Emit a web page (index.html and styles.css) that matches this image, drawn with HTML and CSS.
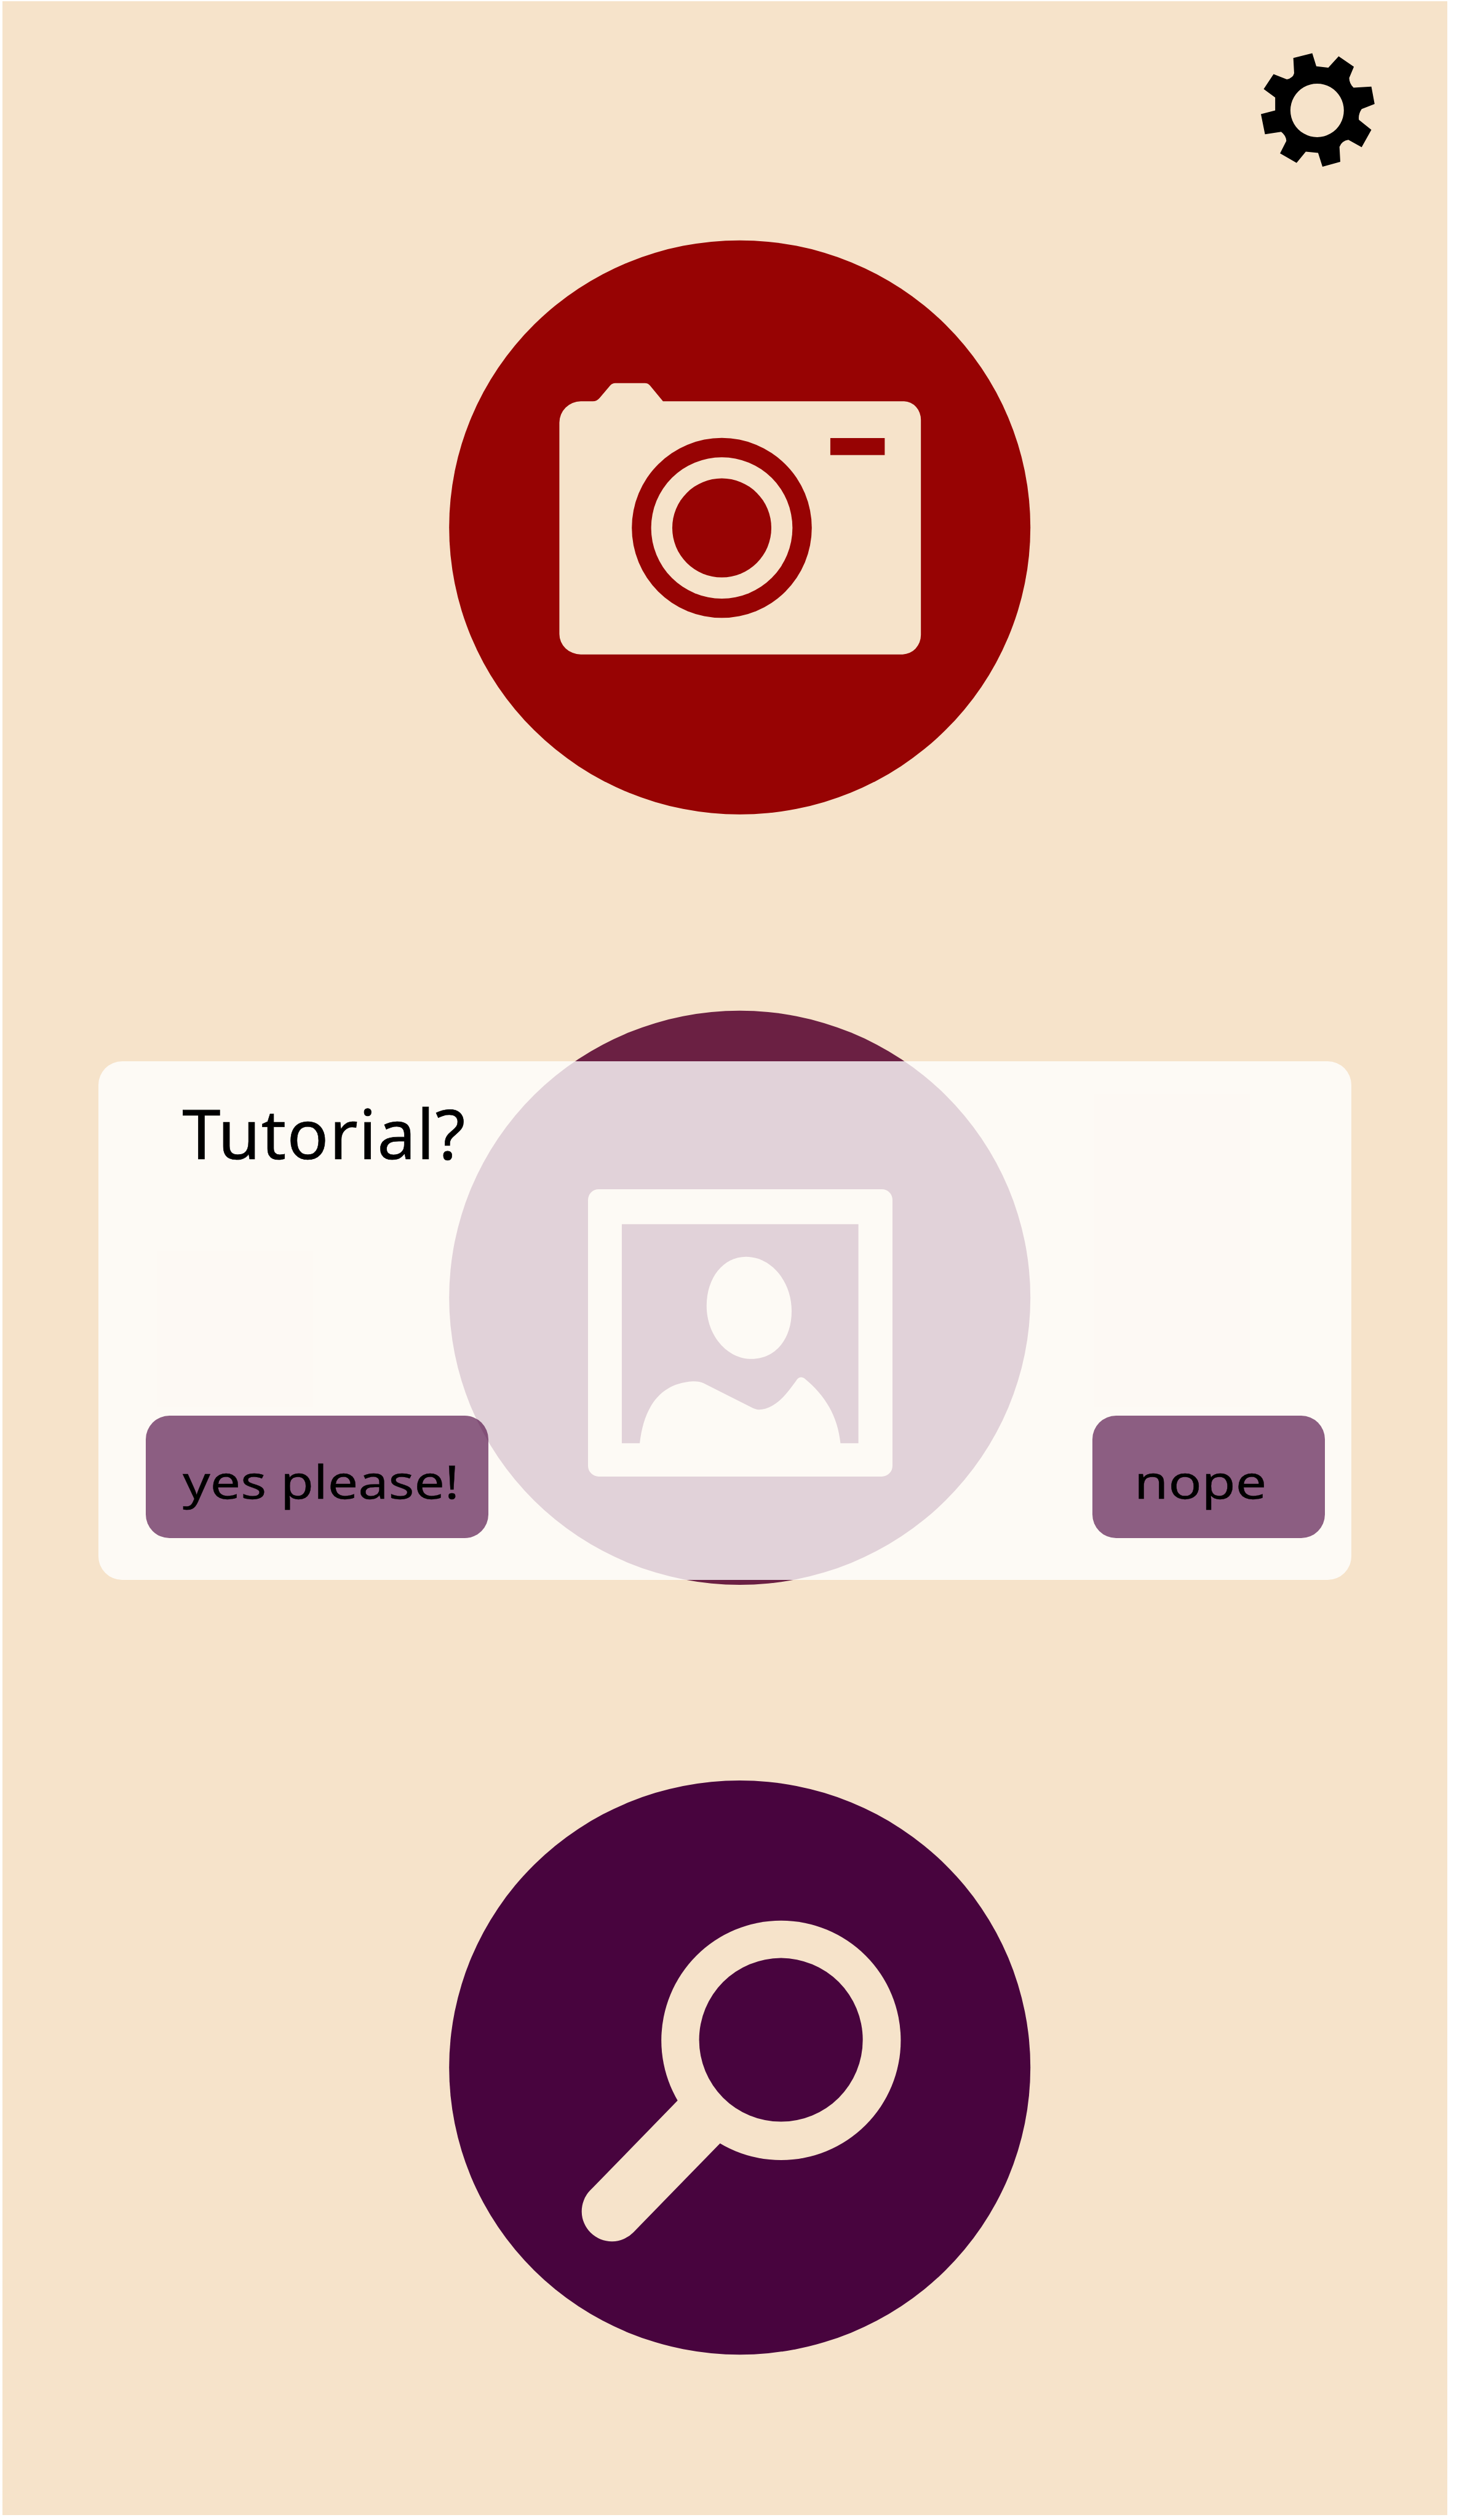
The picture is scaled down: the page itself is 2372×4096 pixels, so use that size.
FILE: index.html
```html
<!DOCTYPE html>
<html lang="en">
<head>
<meta charset="utf-8">
<title>Tutorial</title>
<link rel="stylesheet" href="styles.css">
</head>
<body>
<main class="screen">
  <header class="topbar">
    <svg class="gear" viewBox="290 325 705 705" role="img" aria-label="Settings">
      <path fill-rule="evenodd" d="M490 356L607 327L632 408L706 416L770 346L864 410L835 480Q836 515 862 540L972 533L992 640L912 672Q890 705 895 738L972 800L912 907L830 862Q790 868 775 905L780 997L670 1028L643 942L567 935L510 1004L408 945L447 868Q445 835 415 812L315 827L290 703L378 680L378 600L307 548L368 456L450 488Q488 480 495 450ZM637 515a165 165 0 1 0 .1 0Z"/>
    </svg>
  </header>
  <nav class="menu">
    <svg class="disc disc-camera" viewBox="0 0 1196 1182" role="img" aria-label="Camera">
      <ellipse class="base" cx="597.500" cy="590.500" rx="598.500" ry="591"/>
      <path class="mark" d="M270 331H295Q303 331 309 324L331 298Q335 293.500 341 293.500H402Q409 293.500 413 299L439.400 331H936A35 38 0 0 1 970.500 369V812A38 40 0 0 1 933 852H270A44 42 0 0 1 226 810V375A44 44 0 0 1 270 331Z"/>
      <circle class="base" cx="560.500" cy="591.600" r="185.300"/>
      <circle class="mark" cx="560.500" cy="591.600" r="145.500"/>
      <circle class="base" cx="560.500" cy="591.600" r="102"/>
      <rect class="base" x="784" y="406.600" width="112" height="35"/>
    </svg>
    <svg class="disc disc-gallery" viewBox="0 0 1196 1182" role="img" aria-label="Gallery">
      <ellipse class="base" cx="597.500" cy="592" rx="598.500" ry="591"/>
      <rect class="mark" x="285" y="368.500" width="627" height="591.500" rx="22"/>
      <rect class="base" x="354.600" y="440.500" width="487.200" height="451"/>
      <path class="mark" transform="translate(-.5 1.500)" d="M611 506C662 506 704.800 556 704.800 618C704.800 676 671 716.500 622 716.500C572 716.500 529.700 668 529.700 607C529.700 549 564 506 611 506Z"/>
      <path class="mark" transform="translate(0 1.500)" d="M391.400 891C400 812 436 767 500 762.700Q514 762 523 766.500L619 815Q630 821 637 821C672 819 694 789 716 758Q722 751 730 756C774 792 799 834 805 891Z"/>
    </svg>
    <svg class="disc disc-search" viewBox="0 0 1196 1182" role="img" aria-label="Search">
      <ellipse class="base" cx="597.500" cy="591" rx="598.500" ry="591"/>
      <path class="handle" d="M334 887L520 696"/>
      <circle class="mark" cx="682.500" cy="535" r="246.500"/>
      <circle class="base" cx="682.300" cy="534" r="168.500"/>
    </svg>
  </nav>
  <section class="dialog" role="dialog">
    <h1 class="title">Tutorial?</h1>
    <div class="actions">
      <button class="btn btn-yes"><span class="label">yes please!</span></button>
      <button class="btn btn-no"><span class="label">nope</span></button>
    </div>
  </section>
</main>
</body>
</html>
```
FILE: styles.css
```css
* {
  box-sizing: border-box;
}

body {
  margin: 0;
  background: #fff;
  font-family: "Noto Sans", "Open Sans", sans-serif;
  color: #000;
}

.screen {
  position: relative;
  width: 2349px;
  height: 4086px;
  margin: 2px 0 0 4px;
  background: #f6e3ca;
}

.topbar {
  display: flex;
  justify-content: flex-end;
  padding: 83.5px 117px 0 0;
}

.gear {
  display: block;
  width: 185.6px;
  height: 185.6px;
  overflow: visible;
}

.menu {
  display: flex;
  flex-direction: column;
  gap: 318.2px;
  padding: 119.8px 0 0 726.7px;
}

.disc {
  display: block;
  width: 944.2px;
  height: 933.2px;
  overflow: visible;
}

.disc-camera { --tone: #970303; }
.disc-gallery { --tone: #6b2043; }
.disc-search { --tone: #48043e; }

.base {
  fill: var(--tone);
}

.mark {
  fill: #f6e3ca;
}

.handle {
  stroke: #f6e3ca;
  stroke-width: 124;
  stroke-linecap: round;
}

.dialog {
  position: absolute;
  left: 156.3px;
  top: 1723.1px;
  width: 2037.2px;
  height: 842.6px;
  padding: 59.5px 43px 68px 77px;
  display: flex;
  flex-direction: column;
  justify-content: space-between;
  border-radius: 38.5px;
  background: rgba(255, 255, 255, 0.8);
}

.title {
  margin: 0 0 0 59px;
  font-size: 112px;
  line-height: 112px;
  font-weight: 400;
  letter-spacing: 1.3px;
  -webkit-text-stroke: 0.7px #000;
}

.actions {
  display: flex;
  justify-content: space-between;
}

.btn {
  height: 198.3px;
  margin: 0;
  padding: 68.5px 0 0;
  display: flex;
  align-items: flex-start;
  border: 0;
  border-radius: 38.5px;
  background: rgba(77, 6, 64, 0.64);
  color: #000;
  font: 400 75px/75px "Noto Sans", "Open Sans", sans-serif;
}

.btn-yes {
  width: 556.4px;
  padding-left: 60px;
}

.btn-no {
  width: 378.5px;
  padding-left: 68px;
}

.label {
  white-space: nowrap;
  transform: scaleX(1.17);
  transform-origin: left;
  -webkit-text-stroke: 0.4px #000;
}

.btn-no .label {
  transform: scaleX(1.195);
}
```
